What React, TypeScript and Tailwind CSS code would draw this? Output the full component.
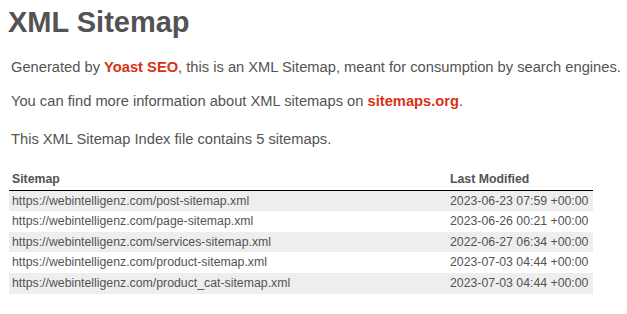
import * as React from "react"

const sitemaps = [
  { loc: "https://webintelligenz.com/post-sitemap.xml", lastmod: "2023-06-23 07:59 +00:00" },
  { loc: "https://webintelligenz.com/page-sitemap.xml", lastmod: "2023-06-26 00:21 +00:00" },
  { loc: "https://webintelligenz.com/services-sitemap.xml", lastmod: "2022-06-27 06:34 +00:00" },
  { loc: "https://webintelligenz.com/product-sitemap.xml", lastmod: "2023-07-03 04:44 +00:00" },
  { loc: "https://webintelligenz.com/product_cat-sitemap.xml", lastmod: "2023-07-03 04:44 +00:00" },
]

export default function App() {
  return (
    <div className="min-h-[314px] bg-white px-2 pt-[5px] font-['Liberation_Sans',Arial,sans-serif] text-[#545353]">
      <h1 className="m-0 text-[29px] font-bold leading-[34px]">XML Sitemap</h1>

      <div className="mt-[19px] space-y-[16px] whitespace-nowrap text-[14.7px] leading-[18px]">
        <p className="mx-[3px]">
          Generated by{" "}
          <a href="#" className="font-bold text-[#da3114]">
            Yoast SEO
          </a>
          , this is an XML Sitemap, meant for consumption by search engines.
        </p>
        <p className="mx-[3px]">
          You can find more information about XML sitemaps on{" "}
          <a href="#" className="font-bold text-[#da3114]">
            sitemaps.org
          </a>
          .
        </p>
        <p className="mx-[3px] pt-[4px]">This XML Sitemap Index file contains 5 sitemaps.</p>
      </div>

      <table className="mt-[21px] ml-px w-[584px] border-collapse whitespace-nowrap text-[12.3px] leading-[14.6px]">
        <thead>
          <tr>
            <th className="w-[438px] border-b border-black p-[3px] text-left font-bold">Sitemap</th>
            <th className="border-b border-black p-[3px] text-left font-bold">Last Modified</th>
          </tr>
        </thead>
        <tbody>
          {sitemaps.map((s, i) => (
            <tr key={s.loc} className={i % 2 === 0 ? "bg-[#eee]" : "bg-white"}>
              <td className="p-[3px]">
                <a href="#" className="text-[#545353]">
                  {s.loc}
                </a>
              </td>
              <td className="p-[3px]">{s.lastmod}</td>
            </tr>
          ))}
        </tbody>
      </table>
    </div>
  )
}
